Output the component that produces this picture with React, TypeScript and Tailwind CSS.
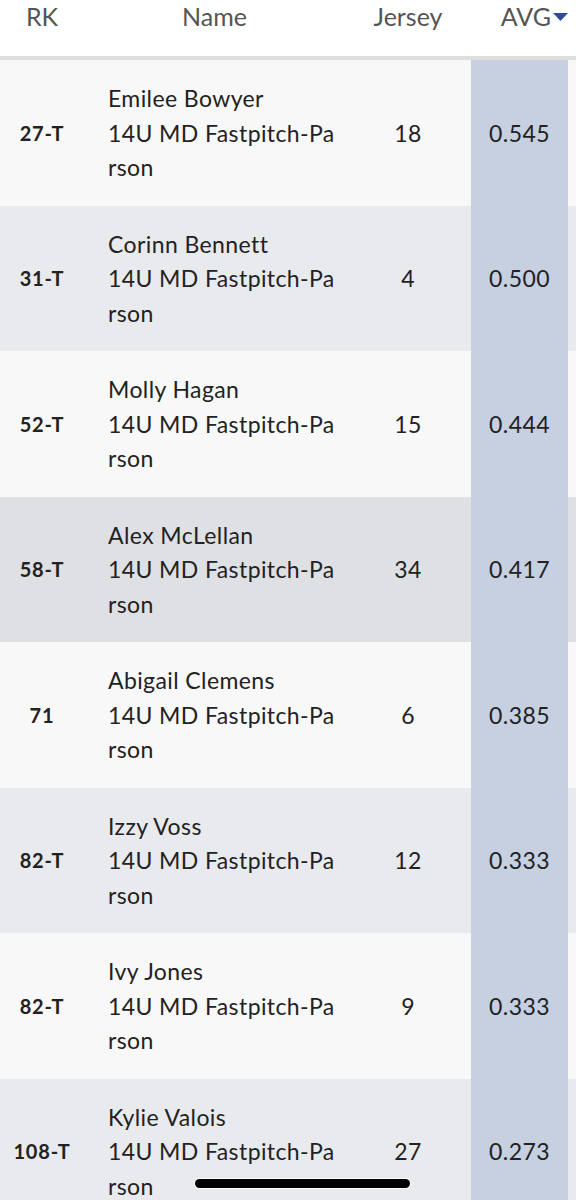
const players = [
  { rk: "27-T", name: "Emilee Bowyer", team: "14U MD Fastpitch-Parson", jersey: "18", avg: "0.545" },
  { rk: "31-T", name: "Corinn Bennett", team: "14U MD Fastpitch-Parson", jersey: "4", avg: "0.500" },
  { rk: "52-T", name: "Molly Hagan", team: "14U MD Fastpitch-Parson", jersey: "15", avg: "0.444" },
  { rk: "58-T", name: "Alex McLellan", team: "14U MD Fastpitch-Parson", jersey: "34", avg: "0.417" },
  { rk: "71", name: "Abigail Clemens", team: "14U MD Fastpitch-Parson", jersey: "6", avg: "0.385" },
  { rk: "82-T", name: "Izzy Voss", team: "14U MD Fastpitch-Parson", jersey: "12", avg: "0.333" },
  { rk: "82-T", name: "Ivy Jones", team: "14U MD Fastpitch-Parson", jersey: "9", avg: "0.333" },
  { rk: "108-T", name: "Kylie Valois", team: "14U MD Fastpitch-Parson", jersey: "27", avg: "0.273" },
];

const rowBg = (i: number) => {
  if (i === 3) return "bg-[#dfe0e4]";
  return i % 2 === 0 ? "bg-[#f8f8f8]" : "bg-[#e9eaee]";
};

const cols = "grid grid-cols-[84px_261px_126px_97px_8px]";

const App = () => {
  return (
    <div className="relative h-[1200px] w-[576px] overflow-hidden bg-white font-['Lato',sans-serif] text-[#222]">
      <div className={`${cols} h-[60px] items-start border-b-[4px] border-[#dedede] text-[25px] leading-[32px] text-[#555]`}>
        <div className="text-center">RK</div>
        <div className="text-center">Name</div>
        <div className="text-center">Jersey</div>
        <div className="flex items-center justify-end">
          AVG
          <svg width="15" height="8" viewBox="0 0 15 8" className="ml-[2px] mt-[1px]">
            <path d="M0 0 H15 L7.5 8 Z" fill="#2d4d91" />
          </svg>
        </div>
        <div />
      </div>

      {players.map((p, i) => (
        <div key={i} className={`${cols} h-[145.5px] ${rowBg(i)}`}>
          <div className="flex items-center justify-center text-[20px] font-bold tracking-[0.8px]">{p.rk}</div>
          <div className="flex items-center pl-[24px]">
            <div className="w-[228px] break-all text-[23px] leading-[34.5px] tracking-[0.4px]">
              <div>{p.name}</div>
              <div>{p.team}</div>
            </div>
          </div>
          <div className="flex items-center justify-center text-[23px] tracking-[0.4px]">{p.jersey}</div>
          <div className="flex items-center justify-center bg-[#c6d0e1] text-[23px] tracking-[0.4px]">{p.avg}</div>
          <div />
        </div>
      ))}

      <div className="absolute left-[195px] top-[1179px] h-[9px] w-[215px] rounded-full bg-black ring-1 ring-white" />
    </div>
  );
};

export default App;
